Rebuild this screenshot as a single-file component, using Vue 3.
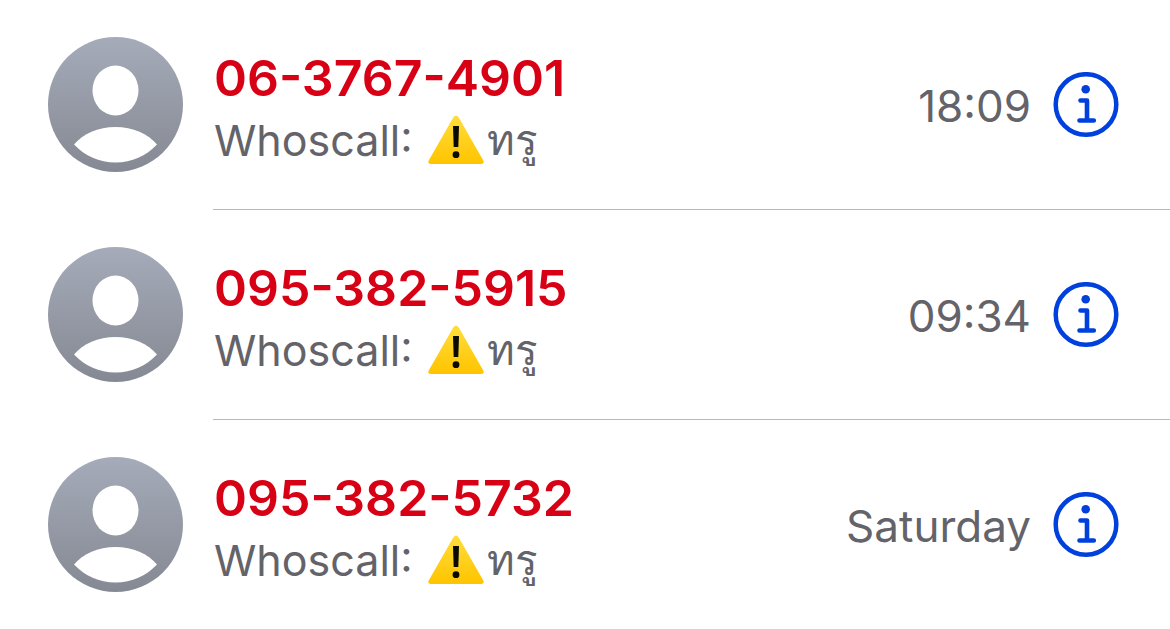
<script setup>
const calls = [
  { number: '06-3767-4901', time: '18:09' },
  { number: '095-382-5915', time: '09:34' },
  { number: '095-382-5732', time: 'Saturday' },
]
</script>

<template>
  <ul class="calls">
    <li v-for="call in calls" :key="call.number" class="call">
      <svg class="avatar" viewBox="0 0 135 135" aria-hidden="true">
        <defs>
          <linearGradient id="avatar-fill" x1="0" y1="0" x2="0" y2="1">
            <stop offset="0" stop-color="#a5abb9" />
            <stop offset="1" stop-color="#858993" />
          </linearGradient>
        </defs>
        <circle cx="67.5" cy="67.5" r="67.5" fill="url(#avatar-fill)" />
        <ellipse cx="67.5" cy="53.5" rx="23" ry="25" fill="#fff" />
        <path d="M26 107.500C35 97 50 90 67.500 90S100 97 109 107.500C98 119 84 125.500 67.500 125.500S37 119 26 107.500Z" fill="#fff" />
      </svg>
      <div class="body">
        <div class="details">
          <div class="number">{{ call.number }}</div>
          <div class="source">
            <span>Whoscall<span class="colon">:</span></span>
            <svg class="warning" viewBox="0 0 56 50" role="img" aria-label="Warning">
              <defs>
                <linearGradient id="warning-fill" x1="0" y1="0" x2="0" y2="1">
                  <stop offset="0" stop-color="#ffdd3c" />
                  <stop offset="1" stop-color="#ffc400" />
                </linearGradient>
              </defs>
              <path d="M25.500 2Q28 -1 30.500 2L55 45Q57 49 53 49H3Q-1 49 1 45Z" fill="url(#warning-fill)" />
              <path d="M25 11H31L30.300 32H25.700Z" fill="#0a0a00" />
              <circle cx="28" cy="39.700" r="3.400" fill="#0a0a00" />
            </svg>
            <span class="thai">ทรู</span>
          </div>
        </div>
        <div class="time">{{ call.time }}</div>
        <button class="info" type="button" :aria-label="`Details for ${call.number}`">
          <svg viewBox="0 0 66 66" aria-hidden="true">
            <circle cx="33" cy="32.500" r="30.300" fill="none" stroke="#0040dd" stroke-width="4.500" />
            <circle cx="32.700" cy="17.200" r="4.300" fill="#0040dd" />
            <path d="M27.500 28.500H34V48.500M26.500 48.500H40.800" fill="none" stroke="#0040dd" stroke-width="4.600" stroke-linecap="round" stroke-linejoin="round" />
          </svg>
        </button>
      </div>
    </li>
  </ul>
</template>

<style>
body {
  margin: 0;
  background: #fff;
}
</style>

<style scoped>
.calls {
  margin: 0;
  padding: 0;
  list-style: none;
  font-family: Inter, "Liberation Sans", sans-serif;
}
.call {
  display: flex;
  align-items: center;
  gap: 30px;
  height: 210px;
  padding-left: 48px;
}
.avatar {
  flex: none;
  width: 135px;
  height: 135px;
  margin-bottom: 1px;
}
.body {
  flex: 1;
  display: flex;
  align-items: center;
  box-sizing: border-box;
  height: 210px;
  padding-right: 51px;
  border-bottom: 1px solid #b8b8bc;
}
.call:last-child .body {
  border-bottom-color: transparent;
}
.details {
  flex: 1;
  padding: 11px 0 0 1px;
}
.number {
  font-size: 50px;
  line-height: 60px;
  font-weight: 600;
  color: #d70015;
}
.source {
  display: flex;
  align-items: center;
  height: 64px;
  font-size: 43px;
  color: #636369;
}
.colon {
  font-feature-settings: "case";
}
.warning {
  width: 56px;
  height: 50px;
  margin: 0 3px 0 15px;
}
.thai {
  font-size: 42px;
  font-weight: 500;
}
.time {
  font-size: 44px;
  line-height: 54px;
  color: #636369;
  padding-top: 2px;
}
.info {
  width: 66px;
  height: 66px;
  margin-left: 22px;
  padding: 0;
  border: 0;
  background: none;
}
.info svg {
  display: block;
  width: 66px;
  height: 66px;
}
</style>
